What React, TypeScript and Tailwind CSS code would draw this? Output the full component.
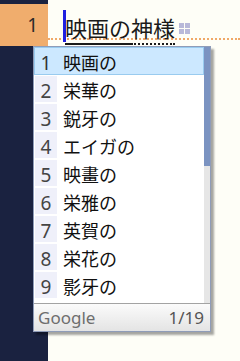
import React from "react";

const candidates = [
  "映画の",
  "栄華の",
  "鋭牙の",
  "エイガの",
  "映畫の",
  "栄雅の",
  "英賀の",
  "栄花の",
  "影牙の",
];

const font = { fontFamily: '"Noto Sans", "Noto Sans CJK JP", sans-serif' };

function GridMark() {
  return (
    <div className="grid grid-cols-2 gap-[1px] w-[11px] h-[11px]">
      <span className="bg-[#b9b9d9]" />
      <span className="bg-[#b9b9d9]" />
      <span className="bg-[#b9b9d9]" />
      <span className="bg-[#b9b9d9]" />
    </div>
  );
}

export default function App() {
  return (
    <div className="relative flex w-[240px] h-[361px] overflow-hidden bg-[#fefef7]" style={font}>
      {/* line numbers */}
      <div className="w-[48px] h-full bg-[#1a2240] pt-[4px]">
        <div className="h-[42px] bg-[#f0ad6d] flex items-center justify-end pr-[10px] text-[19px] text-[#2a2a2a]">
          1
        </div>
      </div>

      {/* editor line */}
      <div className="flex-1">
        <div className="h-[46px] pt-[4px]">
          <div className="h-[36px] flex items-end pl-[15px] border-b-2 border-dotted border-[#f0a868]">
            <span className="w-[3px] h-[32px] bg-[#2020e0] self-start mt-[6px] -mr-[1px]" />
            <span className="text-[22px] leading-[20px] text-[#1a1a1a]">
              <span className="border-b-2 border-[#1a1a1a]">映画の</span>
              <span className="border-b-2 border-dotted border-[#1a1a1a]">神様</span>
            </span>
            <span className="mb-[4px] ml-[4px]">
              <GridMark />
            </span>
          </div>
        </div>
      </div>

      {/* candidate window */}
      <div className="absolute left-[33px] top-[46px] w-[178px] border border-[#8f9cb8] bg-white shadow-[3px_3px_2px_rgba(0,0,0,0.35)]">
        <div className="flex">
          <div className="flex-1 pb-[4px]">
            {candidates.map((c, i) => (
              <div
                key={c}
                className={
                  i === 0
                    ? "flex h-[28px] bg-[#cce8ff] border border-[#99cbef]"
                    : "flex h-[28px] border border-transparent"
                }
              >
                <div
                  className={
                    i === 0
                      ? "w-[22px] flex items-center justify-center pt-[5px] text-[19px] text-[#333]"
                      : "w-[22px] flex items-center justify-center pt-[5px] bg-[#eff0fa] text-[19px] text-[#444]"
                  }
                >
                  {i + 1}
                </div>
                <div className="flex items-center pl-[6px] pt-[5px] text-[18px] text-[#111]">{c}</div>
              </div>
            ))}
          </div>
          <div className="w-[6px] flex flex-col bg-[#e6e6e6]">
            <div className="h-[119px] bg-[#7b93c1]" />
          </div>
        </div>
        <div className="h-[28px] flex items-center justify-between border-t border-[#a3a3a3] bg-gradient-to-b from-[#fbfbfb] to-[#e4e4e4] px-[4px]">
          <span className="text-[17px] text-[#6e6e6e]">Google</span>
          <span className="text-[17px] text-[#555] pr-[2px]">1/19</span>
        </div>
      </div>
    </div>
  );
}
